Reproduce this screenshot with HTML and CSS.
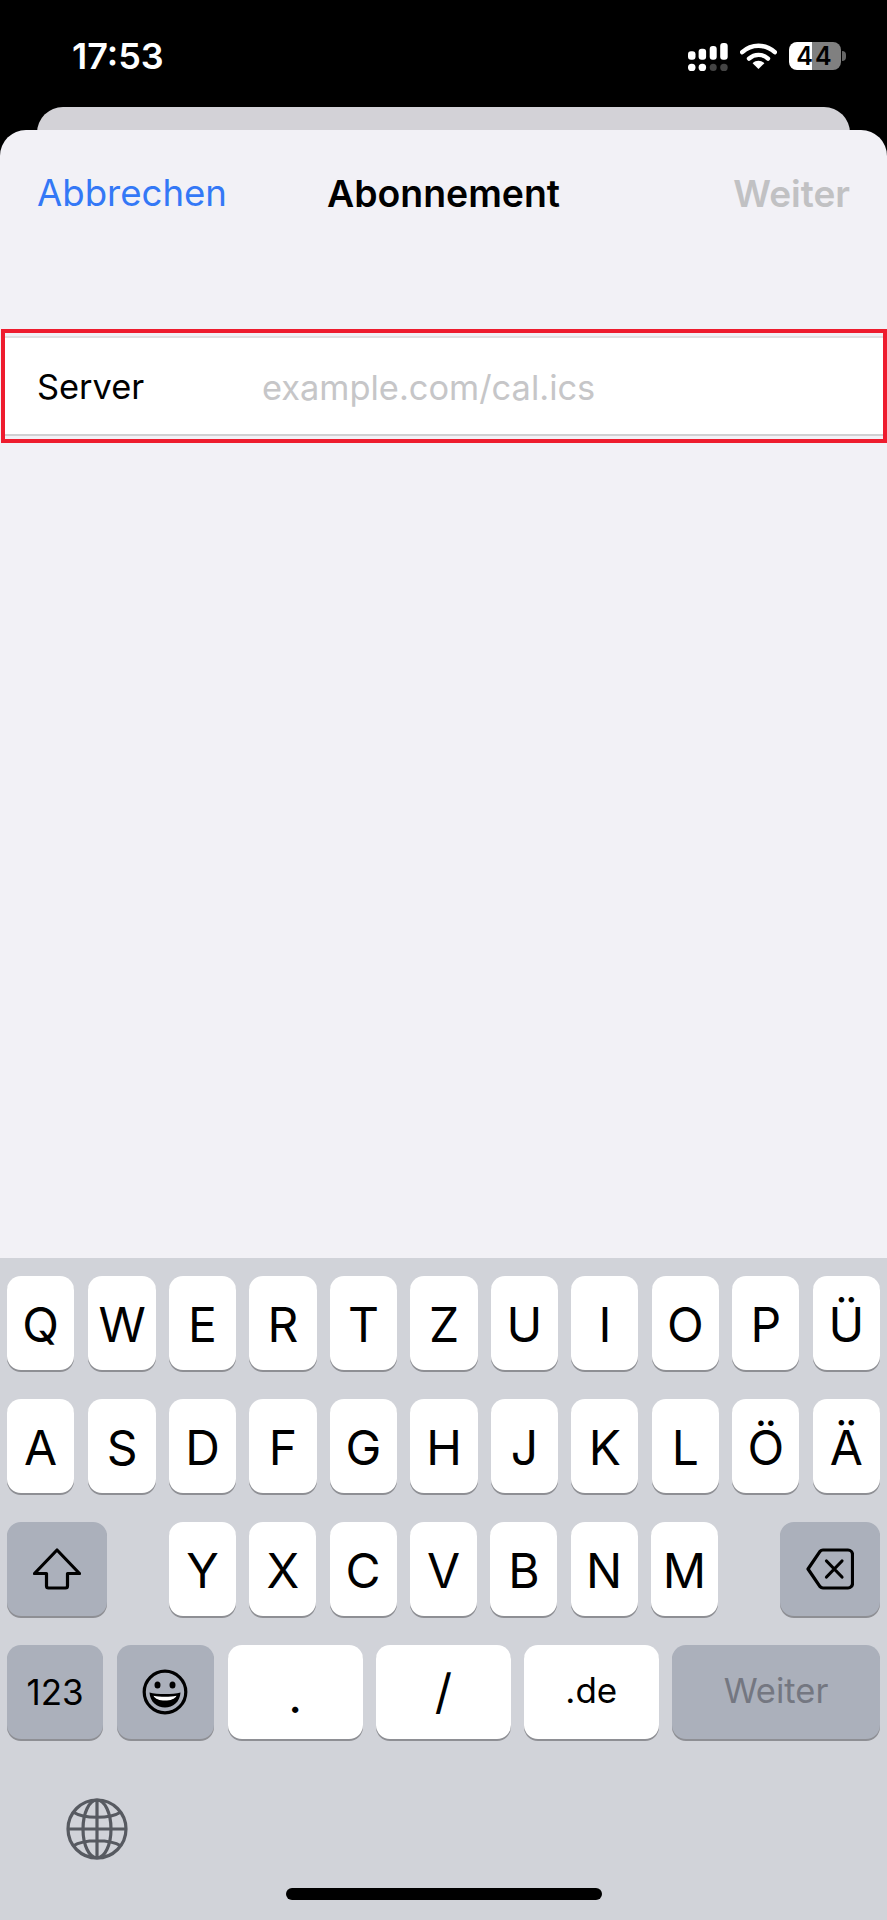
FILE: index.html
```html
<!DOCTYPE html>
<html lang="de">
<head>
    <meta charset="UTF-8">
    <meta name="viewport" content="width=device-width, initial-scale=1.0">
    <title>Abonnement</title>
    <link rel="stylesheet" href="styles.css">
</head>
<body>

<div class="statusBar">
    <div class="time">17:53</div>
    <div class="statusIcons">
        <svg class="signalIcon" width="40" height="28" viewBox="0 0 40 28">
            <rect x="0" y="8.3" width="7.5" height="8.4" rx="3" fill="#fff"/>
            <rect x="10.6" y="5.7" width="7.5" height="11" rx="3" fill="#fff"/>
            <rect x="21.7" y="3" width="7" height="13.7" rx="3" fill="#fff"/>
            <rect x="32.2" y="0" width="7.5" height="16.7" rx="3" fill="#fff"/>
            <rect x="0" y="20.7" width="7.5" height="7.3" rx="3.6" fill="#fff"/>
            <rect x="10.6" y="20.7" width="7.5" height="7.3" rx="3.6" fill="#fff"/>
            <rect x="21.7" y="20.7" width="7" height="7.3" rx="3.5" fill="#444"/>
            <rect x="32.2" y="20.7" width="7.5" height="7.3" rx="3.6" fill="#444"/>
        </svg>
        <svg class="wifiIcon" width="37" height="26" viewBox="0 0 37 26">
            <path d="M2.2 9.2C11.5 .6 25.5 .6 34.8 9.2" fill="none" stroke="#fff" stroke-width="4.4" stroke-linecap="round"/>
            <path d="M9 15.6C14.6 10.6 22.4 10.6 28 15.6" fill="none" stroke="#fff" stroke-width="4.4" stroke-linecap="round"/>
            <path d="M12.6 20.2C16.2 17 20.8 17 24.4 20.2L18.5 26Z" fill="#fff"/>
        </svg>
        <div class="battery">
            <div class="batteryBody">44</div>
            <div class="batteryTip"></div>
        </div>
    </div>
</div>

<div class="backCard"></div>

<div class="sheet">
    <div class="navBar">
        <div class="navCancel">Abbrechen</div>
        <div class="navTitle">Abonnement</div>
        <div class="navNext">Weiter</div>
    </div>
    <div class="highlight">
        <div class="formRow">
            <div class="formLabel">Server</div>
            <div class="formPlaceholder">example.com/cal.ics</div>
        </div>
    </div>
</div>

<div class="keyboard">
    <div class="keyRow letterRow">
        <div class="key">Q</div>
        <div class="key">W</div>
        <div class="key">E</div>
        <div class="key">R</div>
        <div class="key">T</div>
        <div class="key">Z</div>
        <div class="key">U</div>
        <div class="key">I</div>
        <div class="key">O</div>
        <div class="key">P</div>
        <div class="key">Ü</div>
    </div>
    <div class="keyRow letterRow">
        <div class="key">A</div>
        <div class="key">S</div>
        <div class="key">D</div>
        <div class="key">F</div>
        <div class="key">G</div>
        <div class="key">H</div>
        <div class="key">J</div>
        <div class="key">K</div>
        <div class="key">L</div>
        <div class="key">Ö</div>
        <div class="key">Ä</div>
    </div>
    <div class="keyRow">
        <div class="key dark wide">
            <svg width="48" height="42" viewBox="0 0 48 42">
                <path d="M24 2L46.5 25.5H34.5V38A2 2 0 0 1 32.5 40H15.5A2 2 0 0 1 13.5 38V25.5H1.5Z" fill="none" stroke="#000" stroke-width="3.2" stroke-linejoin="round"/>
            </svg>
        </div>
        <div class="letterGroup">
            <div class="key">Y</div>
            <div class="key">X</div>
            <div class="key">C</div>
            <div class="key">V</div>
            <div class="key">B</div>
            <div class="key">N</div>
            <div class="key">M</div>
        </div>
        <div class="key dark wide">
            <svg width="48" height="42" viewBox="0 0 48 42">
                <path d="M17 2H42A4.5 4.5 0 0 1 46.5 6.5V35.5A4.5 4.5 0 0 1 42 40H17A4 4 0 0 1 14 38.7L2 21L14 3.3A4 4 0 0 1 17 2Z" fill="none" stroke="#000" stroke-width="3.2" stroke-linejoin="round"/>
                <path d="M20.5 13L36 29M36 13L20.5 29" fill="none" stroke="#000" stroke-width="3.2" stroke-linecap="round"/>
            </svg>
        </div>
    </div>
    <div class="keyRow">
        <div class="key dark numKey">123</div>
        <div class="key dark emojiKey">
            <svg width="46" height="46" viewBox="0 0 46 46">
                <circle cx="23" cy="23" r="20.8" fill="none" stroke="#000" stroke-width="3.2"/>
                <ellipse cx="15.5" cy="16" rx="3" ry="3.6"/>
                <ellipse cx="30.5" cy="16" rx="3" ry="3.6"/>
                <path d="M7.5 23.5C15 25.5 31 25.5 38.5 23.5C38 33 31 38.5 23 38.5C15 38.5 8 33 7.5 23.5Z"/>
                <path d="M11.5 26.8C18 28.2 28 28.2 34.5 26.8C33 30 28.5 31.6 23 31.6C17.5 31.6 13 30 11.5 26.8Z" fill="#fff"/>
            </svg>
        </div>
        <div class="key midKey"><span class="smallChar">.</span></div>
        <div class="key midKey">/</div>
        <div class="key midKey smallKey">.de</div>
        <div class="key dark goKey">Weiter</div>
    </div>
    <div class="keyboardFooter">
        <svg class="globeIcon" width="62" height="62" viewBox="0 0 62 62">
            <g fill="none" stroke="#575a61" stroke-width="3.2">
                <circle cx="31" cy="31" r="29"/>
                <ellipse cx="31" cy="31" rx="14" ry="29"/>
                <path d="M31 2V60M2 31H60M7 14C18 21 44 21 55 14M7 48C18 41 44 41 55 48"/>
            </g>
        </svg>
        <div class="homeBar"></div>
    </div>
</div>

</body>
</html>
```

FILE: styles.css
```css
* {
    box-sizing: border-box;
}

body {
    font-family: 'Inter', 'Liberation Sans', sans-serif;
    display: flex;
    flex-direction: column;
    height: 1920px;
    margin: 0;
    background-color: black;
    color: black;
    overflow: hidden;
}

.statusBar {
    display: flex;
    justify-content: space-between;
    height: 107px;
    padding: 38px 41px 0 72px;
    color: white;
}

.time {
    font-size: 36px;
    font-weight: 600;
    line-height: 37px;
}

.statusIcons {
    display: flex;
    gap: 12px;
    padding-top: 5px;
    align-items: flex-start;
}

.battery {
    display: flex;
    align-items: center;
    gap: 1px;
    margin-top: -1px;
}

.batteryBody {
    width: 52px;
    height: 28px;
    border-radius: 8px;
    background: linear-gradient(90deg, white 23px, #808080 23px);
    color: black;
    font-size: 25px;
    font-weight: 600;
    letter-spacing: 2px;
    line-height: 28px;
    text-align: center;
}

.batteryTip {
    width: 4px;
    height: 10px;
    border-radius: 0 5px 5px 0;
    background-color: #666;
}

.backCard {
    flex: none;
    height: 60px;
    margin: 0 37px -37px;
    border-radius: 26px 26px 0 0;
    background-color: #d3d2d7;
}

.sheet {
    flex: 1;
    border-radius: 26px 26px 0 0;
    background-color: #f2f1f6;
    position: relative;
    padding-top: 199px;
}

.navBar {
    position: absolute;
    top: 0;
    left: 0;
    right: 0;
    display: flex;
    justify-content: space-between;
    align-items: center;
    height: 126px;
    padding: 0 37px;
    font-size: 37px;
}

.navCancel {
    color: #3478f6;
    width: 190px;
    font-size: 36.6px;
}

.navTitle {
    font-size: 37.4px;
    font-weight: 600;
}

.navNext {
    width: 190px;
    text-align: right;
    color: #c1c1c3;
    font-weight: 600;
}

.highlight {
    border: 4px solid #ee1c2e;
    margin-left: 1px;
    height: 114px;
    padding-top: 3px;
}

.formRow {
    display: flex;
    align-items: center;
    height: 100px;
    background-color: white;
    border-top: 2px solid #e0e0e2;
    border-bottom: 2px solid #d0d0d2;
    padding-left: 32px;
    font-size: 34.4px;
}

.formLabel {
    width: 225px;
}

.formPlaceholder {
    padding-top: 2px;
    color: #c6c6c8;
}

.keyboard {
    flex: none;
    height: 662px;
    background-color: #d1d3d9;
    padding: 18px 7px 0;
    display: flex;
    flex-direction: column;
    gap: 29px;
}

.keyRow {
    display: flex;
    gap: 13.4px;
}

.letterRow > .key:first-child {
    margin-right: 1px;
}

.letterGroup {
    display: flex;
    gap: 13.4px;
    flex: 1;
    margin: 0 48.6px;
}

.key {
    flex: 1;
    display: flex;
    justify-content: center;
    align-items: center;
    height: 94px;
    padding-top: 3px;
    border-radius: 14px;
    background-color: white;
    box-shadow: 0 2px 0 #8e8f94;
    font-size: 48px;
    line-height: 1;
}

.key.dark {
    background-color: #abb0bb;
    padding-top: 0;
}

.key.wide {
    flex: none;
    width: 100px;
}

.key.numKey {
    flex: none;
    width: 96px;
    margin-right: 0.6px;
    font-size: 35px;
}

.key.emojiKey {
    flex: none;
    width: 97px;
    margin-right: 0.6px;
}

.key.midKey {
    padding-top: 0;
}

.smallChar {
    padding-top: 8px;
}

.key.smallKey {
    font-size: 35px;
    padding-bottom: 3px;
}

.key.goKey {
    flex: none;
    width: 208px;
    font-size: 34.5px;
    padding-bottom: 2px;
    color: #747781;
}

.keyboardFooter {
    position: relative;
    flex: 1;
}

.globeIcon {
    position: absolute;
    top: 30px;
    left: 59px;
}

.homeBar {
    position: absolute;
    left: 279px;
    top: 120px;
    width: 316px;
    height: 12px;
    border-radius: 6px;
    background-color: black;
}
```
